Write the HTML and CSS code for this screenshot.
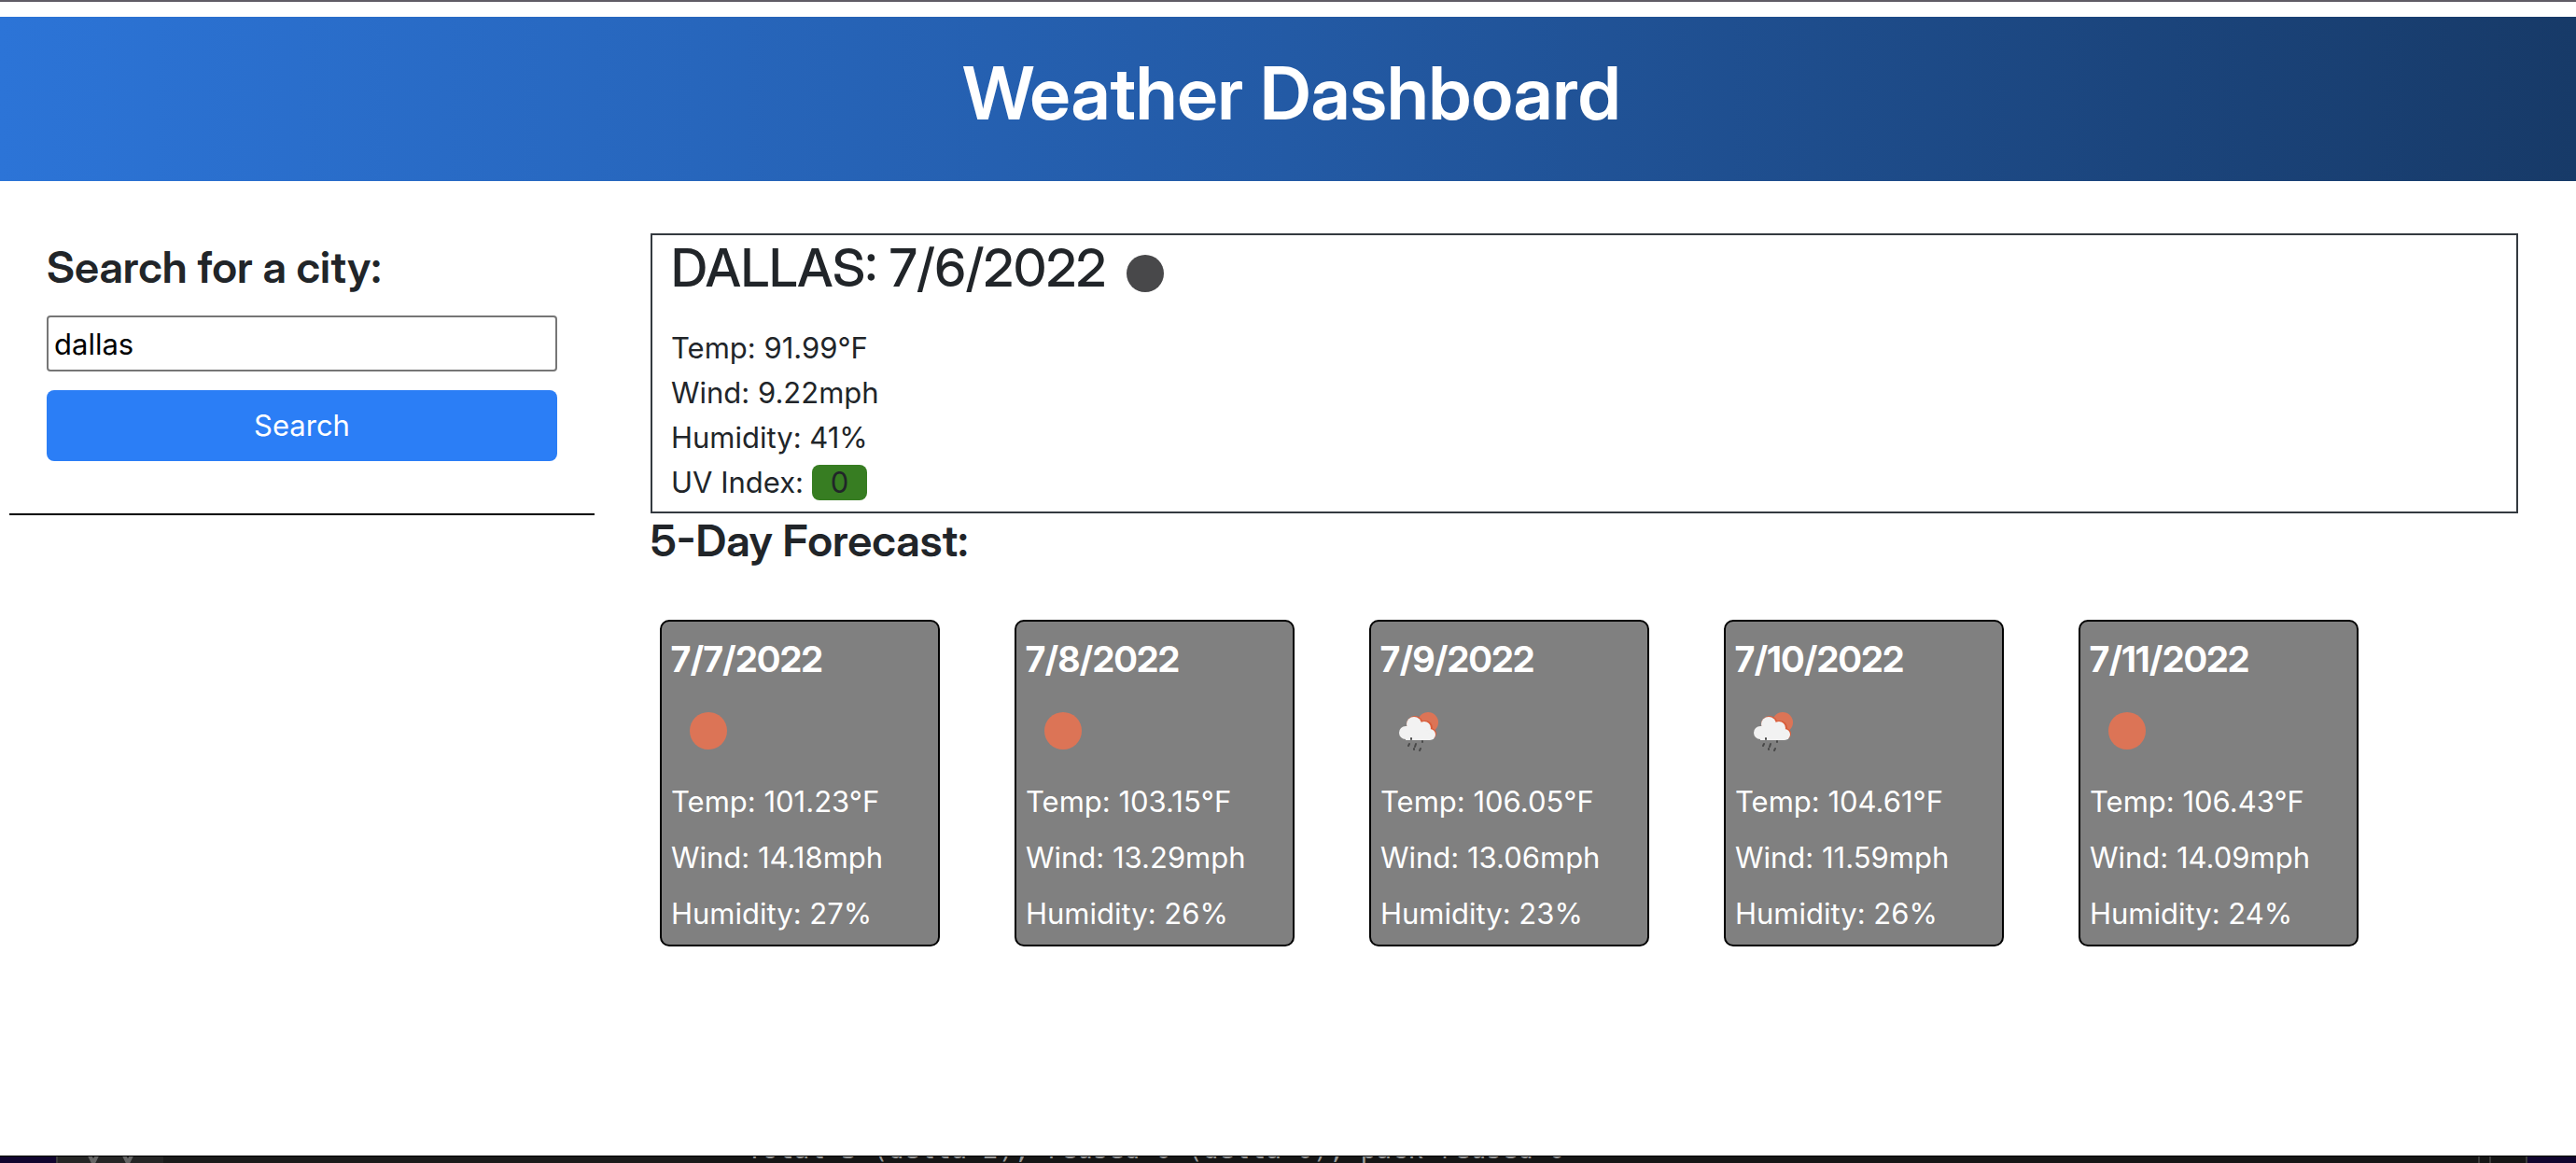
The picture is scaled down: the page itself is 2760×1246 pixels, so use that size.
FILE: index.html
```html
<!DOCTYPE html>
<html lang="en">
<head>
<meta charset="utf-8">
<meta name="viewport" content="width=device-width, initial-scale=1">
<title>Weather Dashboard</title>
<link rel="stylesheet" href="styles.css">
</head>
<body>
<svg class="symbols" aria-hidden="true">
  <symbol id="sun" viewBox="10 3 80 93"><circle cx="50" cy="50" r="20" fill="#dc7456"/></symbol>
  <symbol id="rain" viewBox="10 3 80 93">
    <circle cx="61" cy="41" r="11" fill="#dc7456"/>
    <g fill="#d95b38">
      <circle cx="47" cy="43" r="9"/>
      <circle cx="58" cy="47" r="8"/>
      <circle cx="64" cy="53" r="6"/>
    </g>
    <g fill="#f2f2f2">
      <circle cx="46" cy="43" r="8"/>
      <circle cx="37" cy="52" r="7"/>
      <circle cx="57" cy="47" r="7"/>
      <circle cx="63" cy="54" r="6"/>
      <path d="M37 45h20l6 9v6H37z"/>
    </g>
    <g stroke="#484848" stroke-width="2" stroke-linecap="round">
      <path d="M43 58v1M41 64l-1 2M48 64l-1 3M55 61v1M46 69v1M53 69l-1 2"/>
    </g>
  </symbol>
</svg>

<header class="banner">
  <h1 class="banner-title">Weather Dashboard</h1>
</header>

<main class="layout">
  <aside class="sidebar">
    <form class="search" onsubmit="return false">
      <label class="search-label" for="city">Search for a city:</label>
      <input class="search-input" id="city" type="text" value="dallas">
      <button class="search-button" type="submit">Search</button>
    </form>
  </aside>

  <div class="content">
    <section class="current">
      <div class="current-head">
        <h2 class="current-title">DALLAS: 7/6/2022</h2>
        <svg class="current-icon" viewBox="0 0 40 40" role="img" aria-label="Clear night"><circle cx="20" cy="20" r="20" fill="#48484a"/></svg>
      </div>
      <p class="reading">Temp: 91.99°F</p>
      <p class="reading">Wind: 9.22mph</p>
      <p class="reading">Humidity: 41%</p>
      <p class="reading">UV Index: <span class="uv">0</span></p>
    </section>

    <section class="forecast">
      <h2 class="forecast-title">5-Day Forecast:</h2>
      <div class="cards">
        <article class="card">
          <h3 class="card-date">7/7/2022</h3>
          <svg class="card-icon" role="img" aria-label="Sunny"><use href="#sun"/></svg>
          <p class="card-text">Temp: 101.23°F</p>
          <p class="card-text">Wind: 14.18mph</p>
          <p class="card-text">Humidity: 27%</p>
        </article>
        <article class="card">
          <h3 class="card-date">7/8/2022</h3>
          <svg class="card-icon" role="img" aria-label="Sunny"><use href="#sun"/></svg>
          <p class="card-text">Temp: 103.15°F</p>
          <p class="card-text">Wind: 13.29mph</p>
          <p class="card-text">Humidity: 26%</p>
        </article>
        <article class="card">
          <h3 class="card-date">7/9/2022</h3>
          <svg class="card-icon" role="img" aria-label="Rain"><use href="#rain"/></svg>
          <p class="card-text">Temp: 106.05°F</p>
          <p class="card-text">Wind: 13.06mph</p>
          <p class="card-text">Humidity: 23%</p>
        </article>
        <article class="card">
          <h3 class="card-date">7/10/2022</h3>
          <svg class="card-icon" role="img" aria-label="Rain"><use href="#rain"/></svg>
          <p class="card-text">Temp: 104.61°F</p>
          <p class="card-text">Wind: 11.59mph</p>
          <p class="card-text">Humidity: 26%</p>
        </article>
        <article class="card">
          <h3 class="card-date">7/11/2022</h3>
          <svg class="card-icon" role="img" aria-label="Sunny"><use href="#sun"/></svg>
          <p class="card-text">Temp: 106.43°F</p>
          <p class="card-text">Wind: 14.09mph</p>
          <p class="card-text">Humidity: 24%</p>
        </article>
      </div>
    </section>
  </div>
</main>

<footer class="terminal">
  <div class="desk desk-left"></div>
  <div class="tab">
    <svg class="chevrons" viewBox="0 0 56 8" aria-hidden="true"><path d="M3 -3l5 10 5-10M40 -3l5 10 5-10" fill="none" stroke="#666" stroke-width="4"/></svg>
  </div>
  <div class="gutter"></div>
  <div class="output"><span class="output-text">Total 3 (delta 2), reused 0 (delta 0), pack-reused 0</span></div>
  <div class="rail"></div>
  <div class="rail rail-wide"></div>
  <div class="desk desk-right"></div>
</footer>
</body>
</html>
```
FILE: styles.css
```css
* {
  box-sizing: border-box;
}

body {
  display: flex;
  flex-direction: column;
  min-height: 100vh;
  margin: 0;
  border-top: 2px solid #605c65;
  background: #fff;
  color: #212529;
  font-family: Inter, "Liberation Sans", sans-serif;
  font-size: 31px;
  line-height: 48px;
}

h1,
h2,
h3,
p {
  margin: 0;
}

h1,
h2,
h3,
.search-label {
  font-family: "Inter Display", Inter, "Liberation Sans", sans-serif;
  font-variation-settings: "opsz" 32;
}

.symbols {
  position: absolute;
  width: 0;
  height: 0;
}

.banner {
  height: 176px;
  margin-top: 16px;
  padding-top: 34px;
  background: linear-gradient(to right, #2c74d7, #235aa5 50%, #173a68);
  color: #fff;
  text-align: center;
}

.banner-title {
  padding-left: 8px;
  font-size: 78px;
  font-weight: 600;
  line-height: 96px;
}

.layout {
  display: flex;
  flex: 1;
  gap: 60px;
  padding: 56px 62px 0 10px;
}

.sidebar {
  flex: 0 0 627px;
}

.search {
  display: flex;
  flex-direction: column;
  padding: 6px 40px 56px;
  border-bottom: 2px solid #000;
}

.search-label {
  margin-bottom: 22px;
  font-size: 47px;
  font-weight: 600;
  line-height: 60px;
}

.search-input {
  height: 60px;
  margin-bottom: 20px;
  padding: 0 6px;
  border: 2px solid #767676;
  border-radius: 4px;
  font: inherit;
  color: #000;
}

.search-button {
  height: 76px;
  border: 0;
  border-radius: 8px;
  background: #2b7ef6;
  color: #fff;
  font: inherit;
}

.content {
  flex: 1;
}

.current {
  height: 300px;
  padding: 0 20px;
  border: 2px solid #343a40;
}

.current-head {
  display: flex;
  align-items: center;
  gap: 22px;
  height: 97px;
  padding-bottom: 27px;
}

.current-title {
  font-size: 56px;
  font-weight: 500;
  line-height: 68px;
}

.current-icon {
  width: 40px;
  height: 40px;
  margin-top: 12px;
}

.uv {
  display: inline-block;
  padding: 0 20px;
  border-radius: 8px;
  background: #377d22;
  line-height: 38px;
}

.forecast-title {
  font-size: 47px;
  font-weight: 600;
  line-height: 58px;
}

.cards {
  display: flex;
  flex-wrap: wrap;
  gap: 80px;
  padding: 56px 10px 0;
}

.card {
  width: 300px;
  height: 350px;
  padding: 10px;
  border: 2px solid #000;
  border-radius: 10px;
  background: #808080;
  color: #fff;
}

.card-date {
  font-size: 38px;
  font-weight: 700;
  line-height: 60px;
}

.card-icon {
  display: block;
  width: 80px;
  height: 93px;
}

.card-text {
  line-height: 60px;
}

.terminal {
  display: flex;
  height: 8px;
  overflow: hidden;
  border-top: 1px solid #000;
  background: #151515;
}

.desk {
  background: #10052e;
}

.desk-left {
  width: 60px;
}

.desk-right {
  width: 52px;
}

.tab {
  width: 115px;
  padding-left: 30px;
  border-left: 2px solid #3a3a3a;
  background: #252525;
}

.chevrons {
  display: block;
  width: 56px;
  height: 8px;
}

.gutter {
  width: 575px;
  background: #1a1a1a;
}

.output {
  display: flex;
  flex: 1;
  align-items: flex-end;
  padding-left: 50px;
}

.output-text {
  color: #999;
  font-family: "DejaVu Sans Mono", monospace;
  font-size: 28px;
  line-height: 28px;
  white-space: pre;
}

.rail {
  width: 12px;
  border-left: 2px solid #3a3a3a;
}

.rail-wide {
  width: 41px;
  border-right: 2px solid #3a3a3a;
}
```
